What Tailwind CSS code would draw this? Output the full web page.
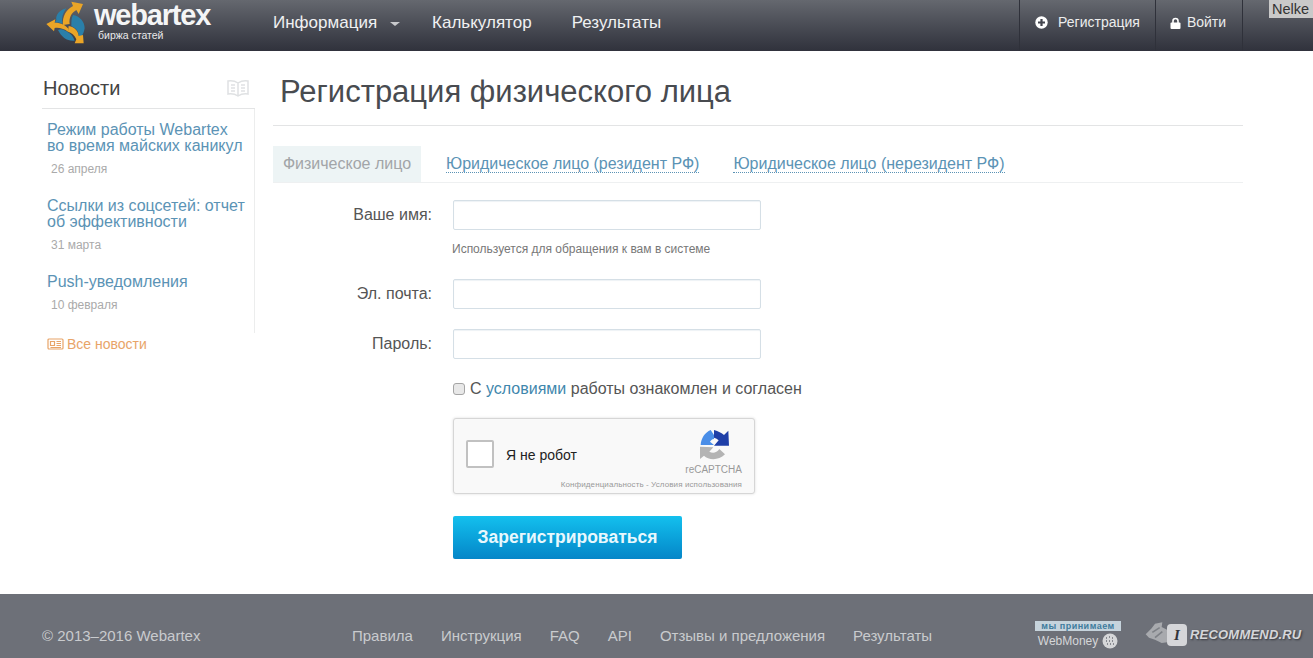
<!DOCTYPE html>
<html lang="ru">
<head>
    <meta charset="UTF-8">
    <title>Регистрация физического лица | Webartex</title>
    <script src="https://cdn.jsdelivr.net/npm/@tailwindcss/browser@4"></script>
</head>
<body class="relative h-[658px] overflow-hidden bg-white font-['Liberation_Sans',Arial,sans-serif]">
    <!-- Header -->
    <header class="h-[51px] flex bg-gradient-to-b from-[#65686f] to-[#30323c] pl-[46px] pr-[70px]">
        <a href="#" class="w-[227px] flex items-start shrink-0">
            <svg width="54" height="50" viewBox="0 0 162 150" class="-ml-[8px] shrink-0">
                <path d="M85 25C65 30 52 45 55 60L50 68C60 66 68 68 74 72C70 55 74 40 85 25Z" fill="#2a7fa9"/>
                <path d="M105 45C125 48 140 65 140 85C138 95 135 105 130 110L122 108C122 95 115 85 100 78C100 65 100 55 105 45Z" fill="#2a7fa9"/>
                <path d="M60 90C70 85 80 90 90 97C98 102 105 108 110 122C90 125 70 112 60 90Z" fill="#2a7fa9"/>
                <path d="M75 75C72 50 85 28 105 18L100 5L135 12L122 42L115 30C100 38 92 55 95 72Z" fill="#eaa527"/>
                <path d="M25 72L52 58L50 68C65 68 80 72 90 85C92 88 92 92 90 95C75 85 62 82 50 84L48 94Z" fill="#eaa527"/>
                <path d="M92 78C110 82 120 92 122 108L135 105L137 130L110 130L115 118C110 105 100 98 90 95Z" fill="#eaa527"/>
            </svg>
            <span class="ml-[2px] flex flex-col">
                <span class="text-[29px] leading-[27px] font-bold tracking-[-1.2px] text-[#f4f5f6] mt-[2px]">webartex</span>
                <span class="text-[10.500px] leading-[12px] text-[#e8e9ea] ml-[4px]">биржа статей</span>
            </span>
        </a>
        <nav class="flex items-center text-[17px] text-[#f0f1f2] pb-[6px]">
            <a href="#" class="flex items-center">Информация
                <span class="ml-[13px] mt-[2px] w-0 h-0 border-x-[5px] border-x-transparent border-t-[4px] border-t-[#c9cacd]"></span>
            </a>
            <a href="#" class="ml-[32px]">Калькулятор</a>
            <a href="#" class="ml-[40px]">Результаты</a>
        </nav>
        <div class="ml-auto flex text-[14px] text-[#eceded]">
            <a href="#" class="w-[136px] flex items-center justify-center gap-[10px] border-l border-[#2f313a] pb-[6px]">
                <svg width="13" height="13" viewBox="0 0 13 13"><circle cx="6.500" cy="6.500" r="6.200" fill="#fff"/><path d="M6.500 3v7M3 6.500h7" stroke="#43454e" stroke-width="2.200"/></svg>
                Регистрация
            </a>
            <a href="#" class="w-[88px] flex items-center justify-center gap-[6px] border-x border-[#2f313a] pb-[6px] pr-[2px]">
                <svg width="11" height="12" viewBox="0 0 11 12"><path d="M3 6V4a2.500 2.500 0 0 1 5 0v2" fill="none" stroke="#fff" stroke-width="1.600"/><rect x="0.500" y="5.500" width="10" height="6.500" rx="1" fill="#fff"/></svg>
                Войти
            </a>
        </div>
    </header>
    <!-- Screenshot name tag -->
    <span class="absolute right-0 top-0 h-[18px] w-[44px] bg-[#c9c9c9] pl-[3px] text-[14.500px] leading-[18px] text-[#333]">Nelke</span>

    <!-- Content -->
    <div class="h-[543px] flex pl-[42px] pr-[70px]">
        <!-- News sidebar -->
        <aside class="w-[213px] shrink-0 pt-[26px]">
            <div class="h-[32px] flex items-start justify-between border-b border-[#e3e4e5] pl-[1px] pr-[6px]">
                <h2 class="text-[20px] leading-[22px] text-[#444]">Новости</h2>
                <svg width="22" height="18" viewBox="0 0 22 18" class="mt-[2px]" fill="none" stroke="#dfe1e3" stroke-width="1.500">
                    <path d="M11 4C8 2 4 1.500 1 2v13c3-.5 7 0 10 2 3-2 7-2.500 10-2V2c-3-.5-7 0-10 2zM11 4v13"/>
                    <path d="M4 6h4M4 9h4M4 12h4M14 6h4M14 9h4M14 12h4"/>
                </svg>
            </div>
            <div class="h-[224px] border-r border-[#eceded] pl-[5px] pt-[13px]">
                <a href="#" class="block text-[16px] leading-[16px] text-[#5b93b5]">Режим работы Webartex<br>во время майских каникул</a>
                <p class="text-[12px] leading-[14px] text-[#aaa] ml-[4px] mt-[8px]">26 апреля</p>
                <a href="#" class="block text-[16px] leading-[16px] text-[#5b93b5] mt-[22px]">Ссылки из соцсетей: отчет<br>об эффективности</a>
                <p class="text-[12px] leading-[14px] text-[#aaa] ml-[4px] mt-[8px]">31 марта</p>
                <a href="#" class="block text-[16px] leading-[16px] text-[#5b93b5] mt-[22px]">Push-уведомления</a>
                <p class="text-[12px] leading-[14px] text-[#aaa] ml-[4px] mt-[8px]">10 февраля</p>
            </div>
            <a href="#" class="ml-[5px] mt-[3px] flex items-center gap-[3px] text-[14px] leading-[16px] text-[#e8a468]">
                <svg width="17" height="12" viewBox="0 0 17 12" fill="none" stroke="#e8a468" stroke-width="1.200"><rect x="1" y="1" width="15" height="10" rx="1"/><path d="M3.500 3.500h4v4h-4zM9.500 3.500h4.500M9.500 5.500h4.500M9.500 7.500h4.500M3.500 9.500h10.500"/></svg>
                Все новости
            </a>
        </aside>

        <!-- Registration form -->
        <main class="ml-[18px] flex-1">
            <h1 class="h-[75px] border-b border-[#e3e4e5] pl-[7px] pt-[24px] text-[31px] leading-[34px] text-[#484b50]">Регистрация физического лица</h1>
            <div class="mt-[20px] h-[37px] flex border-b border-[#eef0f1] text-[16px]">
                <span class="w-[148px] h-[36px] bg-[#edf4f5] text-center leading-[36px] text-[#a2a5a8]">Физическое лицо</span>
                <span class="ml-[25px] mt-[9px] h-[18px] leading-[17px] border-b border-dotted border-[#5b93b5] text-[#5b93b5]">Юридическое лицо (резидент РФ)</span>
                <span class="ml-[34px] mt-[9px] h-[18px] leading-[17px] border-b border-dotted border-[#5b93b5] text-[#5b93b5]">Юридическое лицо (нерезидент РФ)</span>
            </div>

            <div class="mt-[17px] flex">
                <label class="w-[159px] text-right text-[16px] leading-[30px] text-[#555]">Ваше имя:</label>
                <input type="text" class="ml-[21px] w-[308px] h-[30px] rounded-[2px] border border-[#d5dfe6] bg-white shadow-[inset_0_1px_1px_#eef2f5]">
            </div>
            <p class="ml-[179px] mt-[12px] text-[12px] leading-[14px] text-[#777]">Используется для обращения к вам в системе</p>

            <div class="mt-[23px] flex">
                <label class="w-[159px] text-right text-[16px] leading-[30px] text-[#555]">Эл. почта:</label>
                <input type="text" class="ml-[21px] w-[308px] h-[30px] rounded-[2px] border border-[#d5dfe6] bg-white shadow-[inset_0_1px_1px_#eef2f5]">
            </div>
            <div class="mt-[20px] flex">
                <label class="w-[159px] text-right text-[16px] leading-[30px] text-[#555]">Пароль:</label>
                <input type="text" class="ml-[21px] w-[308px] h-[30px] rounded-[2px] border border-[#d5dfe6] bg-white shadow-[inset_0_1px_1px_#eef2f5]">
            </div>

            <div class="ml-[180px] mt-[20px] flex items-center text-[16px] leading-[20px] text-[#555]">
                <input type="checkbox" class="appearance-none w-[12px] h-[12px] mr-[5px] rounded-[3px] border border-[#a5a5a5] bg-[#e8e8e8]">
                <span>С <a href="#" class="text-[#3f87ad]">условиями</a> работы ознакомлен и согласен</span>
            </div>

            <!-- reCAPTCHA -->
            <div class="relative ml-[180px] mt-[19px] w-[302px] h-[76px] rounded-[3px] border border-[#d6d6d6] bg-[#f9f9f9] shadow-[0_0_3px_#ddd]">
                <span class="absolute left-[12px] top-[21px] w-[28px] h-[28px] rounded-[2px] border-2 border-[#c1c1c1] bg-white"></span>
                <span class="absolute left-[52px] top-[28px] text-[14px] leading-[17px] text-[#222]">Я не робот</span>
                <svg width="50" height="40" viewBox="0 0 150 120" class="absolute left-[236px] top-[6px]">
                    <path d="M32 60C33 40 45 22 62 15L72 30V42C66 42 62 48 60 50L72 60Z" fill="#4a8ee8"/>
                    <path d="M72 15C85 18 95 24 102 30L115 17L117 62H72L86 46C82 42 78 40 72 38Z" fill="#1f3fa8"/>
                    <path d="M30 65V102L42 92C55 105 85 108 105 88L88 72C80 84 68 86 58 80L70 67Z" fill="#b4b4b4"/>
                </svg>
                <span class="absolute right-[12px] top-[45px] text-[10px] leading-[12px] text-[#999]">reCAPTCHA</span>
                <span class="absolute right-[12px] top-[61px] text-[8px] leading-[10px] tracking-[0.1px] text-[#999]">Конфиденциальность - Условия использования</span>
            </div>

            <button class="ml-[180px] mt-[22px] block w-[229px] h-[43px] rounded-[2px] bg-gradient-to-b from-[#14c0ee] to-[#0686c8] text-[17.500px] font-bold text-[#e8f8fd]">Зарегистрироваться</button>
        </main>
    </div>

    <!-- Footer -->
    <footer class="h-[64px] flex items-start bg-[#6d7078] pl-[42px] pt-[33px] text-[15px] leading-[18px] text-[#c9cbce]">
        <span class="w-[310px]">© 2013–2016 Webartex</span>
        <nav class="flex gap-[28px]">
            <a href="#">Правила</a>
            <a href="#">Инструкция</a>
            <a href="#">FAQ</a>
            <a href="#">API</a>
            <a href="#">Отзывы и предложения</a>
            <a href="#">Результаты</a>
        </nav>
        <div class="ml-[103px] -mt-[6px] flex flex-col items-center">
            <span class="w-[86px] h-[10px] bg-[#c6d3dc] text-center text-[9px] leading-[10px] font-bold tracking-[0.5px] text-[#3f7c9e]">мы принимаем</span>
            <span class="mt-[1px] flex items-center gap-[4px] text-[12px] leading-[18px] text-[#d5d6d8]">WebMoney
                <svg width="16" height="16" viewBox="0 0 16 16"><circle cx="8" cy="8" r="7.500" fill="#d5d6d8"/><path d="M4 5h1M7 4h1M10 5h1M4 8h1M7 8h1M10 8h1M5 11h1M8 11h1M11 11h1" stroke="#6d7078" stroke-width="1.500"/></svg>
            </span>
        </div>
    </footer>

    <!-- Watermark over the footer -->
    <div class="absolute left-[1145px] top-[621px] flex items-center">
        <svg width="26" height="28" viewBox="0 0 78 84">
            <path d="M2 40L20 22L30 8L52 4L50 18L66 26L78 36V62L50 66L30 56L12 50Z" fill="#a8aaae"/>
            <path d="M22 34L44 20M30 50L52 32" stroke="#7d8086" stroke-width="5"/>
        </svg>
        <span class="-ml-[4px] w-[20px] h-[22px] rounded-[4px] bg-[#d5d6d9] text-center font-['Liberation_Serif',serif] text-[15px] leading-[22px] font-bold italic text-[#33353b]">I</span>
        <span class="ml-[3px] text-[13px] font-bold italic tracking-[0.2px] text-[#d5d6d9] [text-shadow:1px_1px_2px_#33353b]">RECOMMEND.RU</span>
    </div>
</body>
</html>
